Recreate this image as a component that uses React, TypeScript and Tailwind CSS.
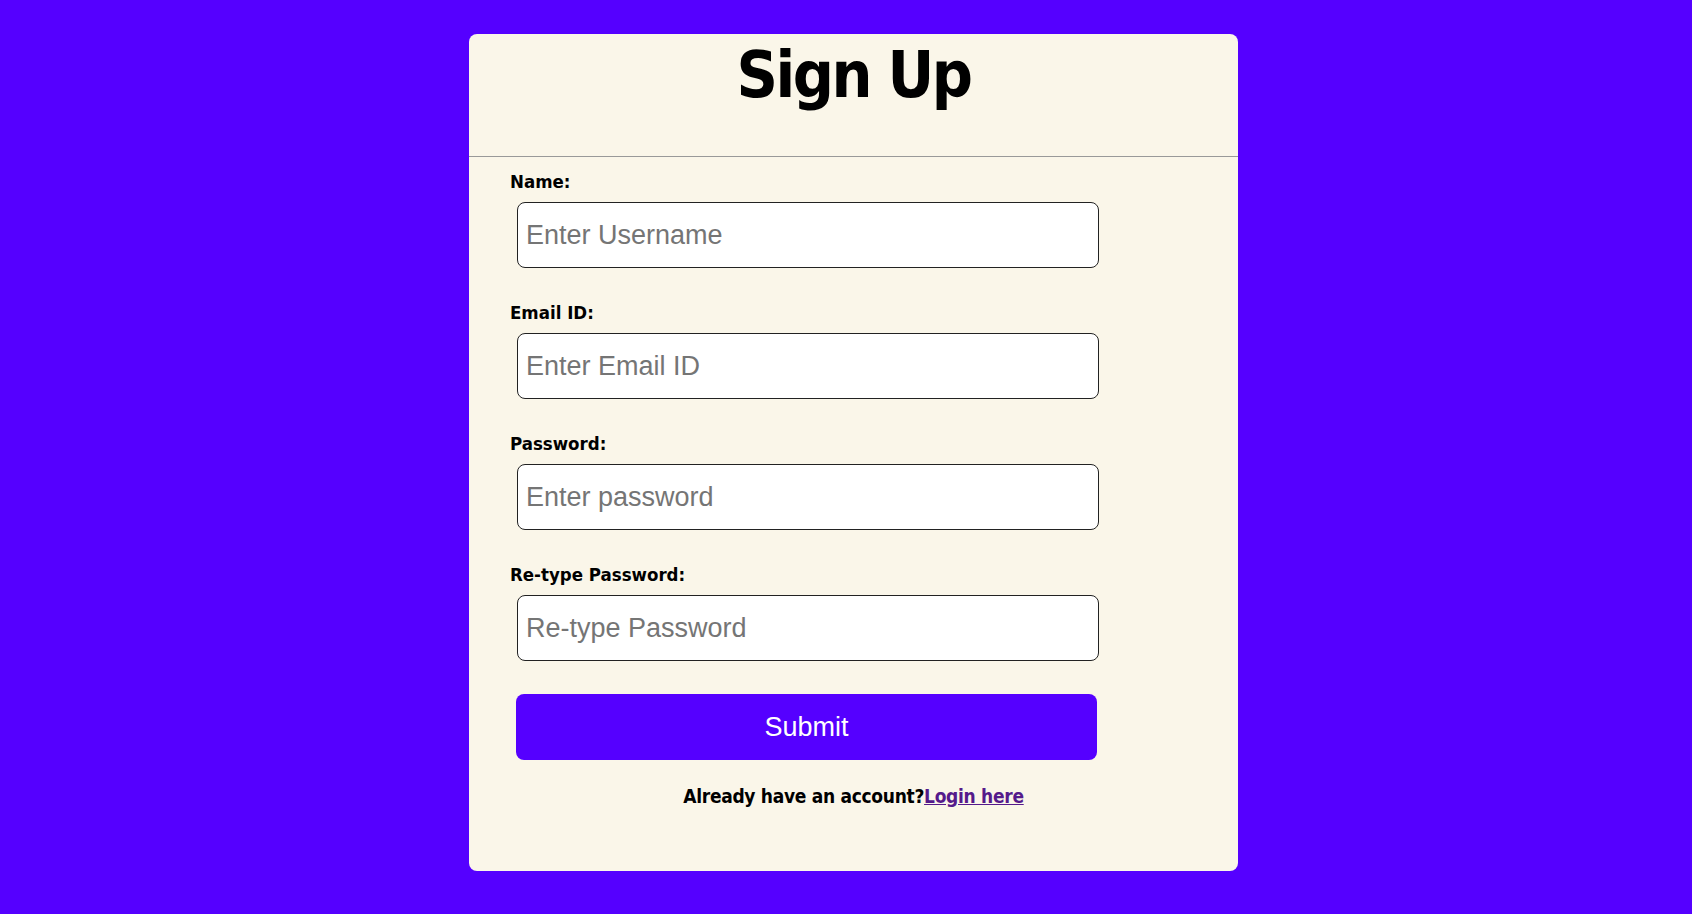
export default function App() {
  const fields = [
    { label: "Name:", placeholder: "Enter Username", type: "text" },
    { label: "Email ID:", placeholder: "Enter Email ID", type: "email" },
    { label: "Password:", placeholder: "Enter password", type: "password" },
    { label: "Re-type Password:", placeholder: "Re-type Password", type: "password" },
  ];

  return (
    <div className="min-h-screen bg-[#5500ff] pl-[15px] pt-[34px] pb-[44px]">
      <div className="mx-auto w-[769px] rounded-lg bg-[#faf6e9]">
        {/* Titulo */}
        <div className="h-[123px] border-b border-[#999999] pt-[1px] text-center">
          <h1 className="font-['DejaVu_Sans_Condensed','DejaVu_Sans',sans-serif] text-[64px] leading-[80px] font-bold tracking-[-2.5px] text-black">
            Sign Up
          </h1>
        </div>

        {/* Formulario */}
        <form className="px-[41px] pt-[13px] pb-[62px]">
          {fields.map((f) => (
            <div key={f.label} className="mb-[33px]">
              <label className="block font-['DejaVu_Sans_Condensed','DejaVu_Sans',sans-serif] text-[18.5px] leading-[24px] font-bold text-black">
                {f.label}
              </label>
              <input
                type={f.type}
                placeholder={f.placeholder}
                className="mt-[8px] ml-[7px] block h-[66px] w-[582px] rounded-lg border border-[#222222] bg-white px-[8px] font-['Liberation_Sans',Arial,sans-serif] text-[27px] text-black placeholder:text-[#757575] focus:outline-none"
              />
            </div>
          ))}

          <button
            type="button"
            className="ml-[6px] h-[66px] w-[581px] rounded-lg bg-[#5500ff] font-['Liberation_Sans',Arial,sans-serif] text-[27px] text-white"
          >
            Submit
          </button>

          <p className="mt-[23px] text-center font-['DejaVu_Sans_Condensed','DejaVu_Sans',sans-serif] text-[19px] leading-[26px] font-bold tracking-[-0.3px] text-black">
            Already have an account?
            <a href="#" className="text-[#551a8b] underline">
              Login here
            </a>
          </p>
        </form>
      </div>
    </div>
  );
}
